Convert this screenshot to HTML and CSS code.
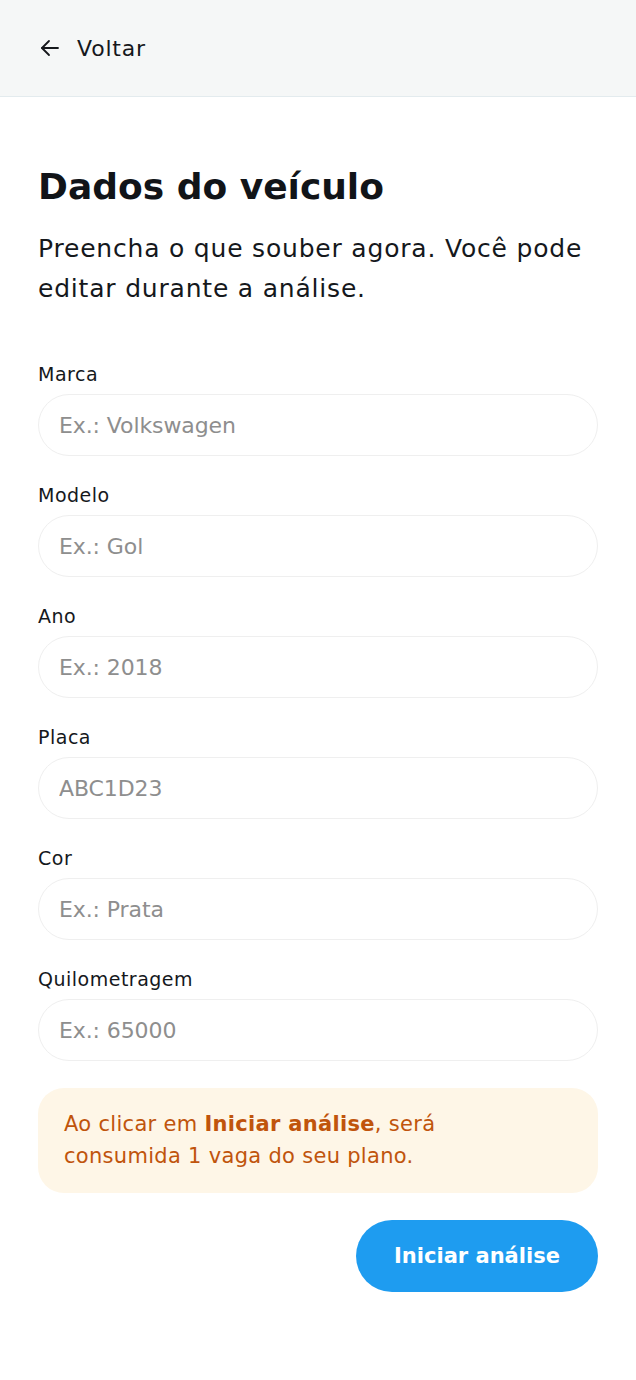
FILE: index.html
```html
<!DOCTYPE html>
<html lang="pt-BR">
<head>
<meta charset="utf-8">
<title>Dados do veículo</title>
<link rel="stylesheet" href="styles.css">
</head>
<body>
<header class="topbar">
  <a class="back" href="#">
    <svg class="back-icon" width="24" height="24" viewBox="0 0 24 24" fill="none" stroke="currentColor" stroke-width="1.8" stroke-linecap="round" stroke-linejoin="round"><path d="M20 12H4"/><path d="M11 19l-7-7 7-7"/></svg>
    <span>Voltar</span>
  </a>
</header>
<main class="content">
  <h1 class="title">Dados do veículo</h1>
  <p class="subtitle">Preencha o que souber agora. Você pode editar durante a análise.</p>
  <form class="form">
    <label class="field"><span class="label">Marca</span><input class="input" placeholder="Ex.: Volkswagen"></label>
    <label class="field"><span class="label">Modelo</span><input class="input" placeholder="Ex.: Gol"></label>
    <label class="field"><span class="label">Ano</span><input class="input" placeholder="Ex.: 2018"></label>
    <label class="field"><span class="label">Placa</span><input class="input" placeholder="ABC1D23"></label>
    <label class="field"><span class="label">Cor</span><input class="input" placeholder="Ex.: Prata"></label>
    <label class="field"><span class="label">Quilometragem</span><input class="input" placeholder="Ex.: 65000"></label>
    <div class="notice">Ao clicar em <strong>Iniciar análise</strong>, será consumida 1 vaga do seu plano.</div>
    <div class="actions"><button type="button" class="btn">Iniciar análise</button></div>
  </form>
</main>
</body>
</html>
```
FILE: styles.css
```css
* { box-sizing: border-box; }
html, body { margin: 0; padding: 0; background: #ffffff; }
body {
  font-family: "DejaVu Sans", "Noto Sans", sans-serif;
  color: #15181c;
}
.topbar {
  height: 97px;
  background: #f5f7f7;
  border-bottom: 1px solid #e3ebee;
  display: flex;
  align-items: center;
  padding-left: 38px;
}
.back {
  display: flex;
  align-items: center;
  gap: 15px;
  color: #15181c;
  text-decoration: none;
  font-size: 22px;
  letter-spacing: 0.8px;
}
.back-icon { display: block; }
.content {
  padding: 68px 38px 40px;
}
.title {
  margin: 0;
  font-size: 36px;
  line-height: 44px;
  font-weight: 700;
  letter-spacing: 0;
  color: #111418;
}
.subtitle {
  margin: 20px 0 0;
  font-size: 25px;
  line-height: 40px;
  letter-spacing: 0.8px;
  color: #15181c;
}
.form {
  margin-top: 53px;
  display: flex;
  flex-direction: column;
  gap: 27px;
}
.field {
  display: flex;
  flex-direction: column;
  gap: 8px;
}
.label {
  font-size: 19px;
  line-height: 24px;
  letter-spacing: 0.5px;
  color: #15181c;
}
.input {
  height: 62px;
  width: 100%;
  border: 1px solid #efefef;
  border-radius: 31px;
  padding: 0 20px;
  font-family: inherit;
  font-size: 22px;
  letter-spacing: -0.1px;
  color: #15181c;
  background: #fff;
  outline: none;
}
.input::placeholder { color: #8e8e8e; }
.notice {
  background: #fef6e7;
  border-radius: 26px;
  padding: 20px 50px 21px 26px;
  font-size: 21px;
  line-height: 32px;
  letter-spacing: 0.3px;
  color: #c0540c;
}
.notice strong { font-weight: 700; }
.actions {
  display: flex;
  justify-content: flex-end;
}
.btn {
  width: 242px;
  height: 72px;
  border: none;
  border-radius: 36px;
  background: #1e9cf0;
  color: #fff;
  font-family: inherit;
  font-size: 21px;
  font-weight: 700;
  letter-spacing: 0;
}
```
